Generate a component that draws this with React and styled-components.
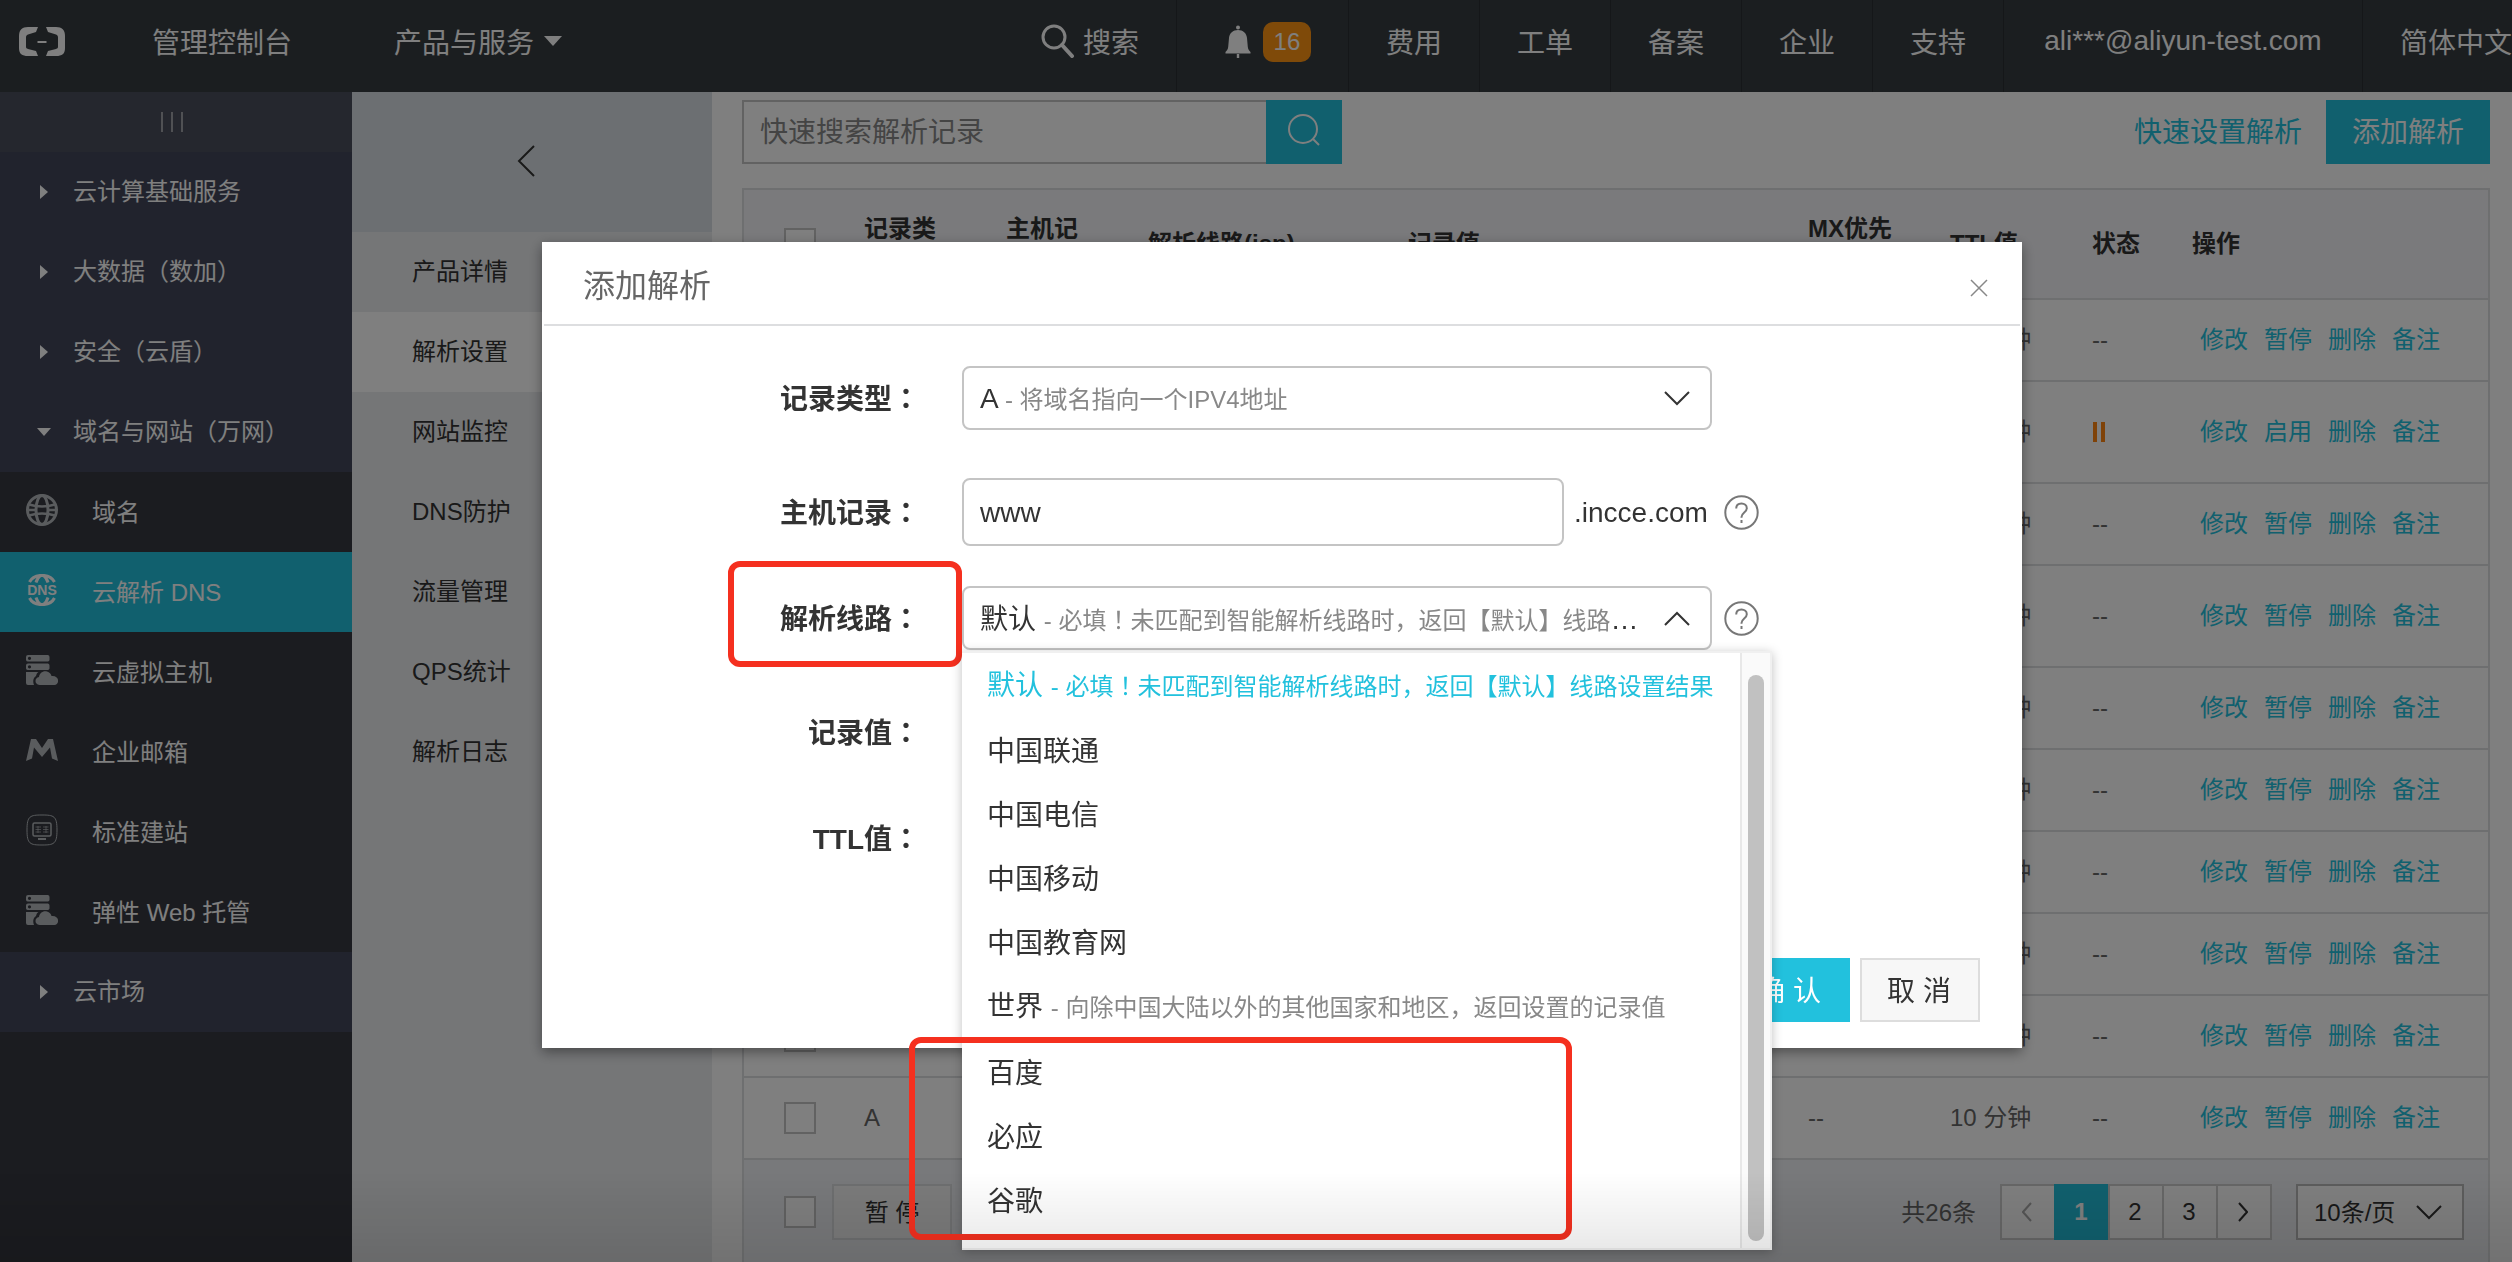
import React from "react";
import styled, { createGlobalStyle, css } from "styled-components";

const color = {
  brand: "#22c1dd",
  ink: "#333",
  note: "#888",
  line: "#dddee0",
  field: "#c4c4c4",
  mark: "#f5301f",
};

const GlobalStyle = createGlobalStyle`
  *, *::before, *::after { box-sizing: border-box; }
  body {
    margin: 0;
    overflow: hidden;
    font-family: "Liberation Sans", "Noto Sans CJK SC", sans-serif;
    font-size: 24px;
    color: ${color.ink};
    background: #fff;
  }
  button, input, select { font: inherit; color: inherit; margin: 0; }
  a { text-decoration: none; color: inherit; }
  ul { list-style: none; margin: 0; padding: 0; }
  svg { display: block; flex: none; }
`;

const Page = styled.div`
  height: 100vh;
  display: flex;
  flex-direction: column;
  overflow: hidden;
`;

/* ---------- top bar ---------- */

const TopBar = styled.header`
  flex: none;
  height: 92px;
  display: flex;
  align-items: stretch;
  background: #373d41;
  color: #fff;
  font-size: 28px;
  overflow: hidden;
`;

const Brand = styled.a`
  width: 152px;
  flex: none;
  padding-left: 18px;
  padding-bottom: 8px;
  display: flex;
  align-items: center;
`;

const TopLink = styled.a`
  display: flex;
  align-items: center;
  gap: 10px;
  padding-bottom: 10px;
  margin-right: 102px;
  white-space: nowrap;
`;

const TopNav = styled.nav`
  margin-left: auto;
  display: flex;
  flex: none;
`;

const TopItem = styled.a`
  display: flex;
  align-items: center;
  justify-content: ${(p) => (p.$end ? "flex-end" : "center")};
  gap: ${(p) => (p.$gap ? p.$gap : 8)}px;
  min-width: ${(p) => p.$min || 0}px;
  padding: 0 ${(p) => (p.$last ? 0 : 37)}px ${(p) => (p.$gap ? 8 : 10)}px 37px;
  border-left: 1px solid ${(p) => (p.$first ? "transparent" : "#2a2f32")};
  white-space: nowrap;
`;

const Count = styled.span`
  width: 48px;
  height: 40px;
  border-radius: 10px;
  background: #ff9413;
  font-size: 24px;
  line-height: 40px;
  text-align: center;
`;

/* ---------- side columns ---------- */

const Body = styled.div`
  flex: 1;
  min-height: 0;
  display: flex;
`;

const Sidebar = styled.nav`
  width: 352px;
  flex: none;
  background: #363840;
  color: #fff;
`;

const Collapse = styled.button`
  display: flex;
  align-items: center;
  justify-content: center;
  gap: 8px;
  width: 100%;
  height: 60px;
  padding: 0 8px 0 0;
  border: 0;
  background: #4b4f5c;
  span { width: 2px; height: 20px; background: #a0a2a8; }
`;

const Group = styled.a`
  display: flex;
  align-items: center;
  gap: 21px;
  height: 80px;
  padding: 0 0 6px 36px;
  background: #43475a;
`;

const ArrowSlot = styled.span`
  width: 16px;
  padding-top: 6px;
  display: flex;
  justify-content: center;
`;

const SubItem = styled.a`
  display: flex;
  align-items: center;
  gap: 34px;
  height: 80px;
  padding: 0 0 4px 26px;
  background: ${(p) => (p.$active ? color.brand : "#363840")};
  svg { color: ${(p) => (p.$active ? "#fff" : "#b4b8bc")}; }
`;

const ProductNav = styled.nav`
  width: 360px;
  flex: none;
  background: #eaecef;
`;

const ProductHead = styled.div`
  height: 140px;
  display: flex;
  justify-content: center;
  align-items: center;
  background: #d9dfe4;
`;

const BackButton = styled.button`
  border: 0;
  background: none;
  padding: 0 12px 2px 0;
`;

const ProductItem = styled.a`
  display: flex;
  align-items: center;
  height: 80px;
  padding: 0 0 6px 60px;
  background: ${(p) => (p.$active ? "#fff" : "transparent")};
`;

/* ---------- records ---------- */

const Main = styled.main`
  flex: 1;
  min-width: 0;
  padding: 8px 22px 0 30px;
  background: #fff;
`;

const Toolbar = styled.div`
  display: flex;
  align-items: center;
  height: 64px;
  margin-bottom: 24px;
  font-size: 28px;
`;

const SearchForm = styled.form`
  display: flex;
  height: 64px;
`;

const SearchInput = styled.input`
  width: 524px;
  border: 2px solid ${color.field};
  border-right: 0;
  border-radius: 0;
  padding: 2px 16px 0 16px;
  background: #fff;
  &::placeholder { color: #888; opacity: 1; }
`;

const SearchButton = styled.button`
  width: 76px;
  border: 0;
  padding: 0 0 4px;
  display: flex;
  align-items: center;
  justify-content: center;
  background: ${color.brand};
`;

const QuickLink = styled.a`
  margin-left: auto;
  margin-right: 24px;
  padding-bottom: 4px;
  color: ${color.brand};
`;

const AddButton = styled.button`
  height: 64px;
  padding: 0 26px 4px;
  border: 0;
  background: ${color.brand};
  color: #fff;
`;

const Records = styled.table`
  width: 100%;
  table-layout: fixed;
  border-collapse: separate;
  border-spacing: 0;
  border: 2px solid ${color.line};
  border-bottom: 0;
`;

const cell = css`
  padding: 0 30px 0 20px;
  text-align: left;
  vertical-align: middle;
  line-height: 30px;
  border-bottom: 2px solid ${color.line};
  &:first-child { padding: 0 0 0 40px; }
`;

const Th = styled.th`
  ${cell}
  height: 110px;
  background: #f4f5f8;
  font-weight: bold;
`;

const Td = styled.td`
  ${cell}
  height: ${(p) => (p.$tall ? 102 : 82)}px;
  color: #666;
`;

const Check = styled.input`
  appearance: none;
  display: block;
  width: 32px;
  height: 32px;
  border: 2px solid ${color.field};
  background: #fff;
`;

const Actions = styled.div`
  display: flex;
  gap: 16px;
  padding-left: 8px;
  color: ${color.brand};
  white-space: nowrap;
`;

const Paused = styled.span`
  display: flex;
  gap: 4px;
  padding-left: 1px;
  span { width: 4px; height: 20px; background: #ff8410; }
`;

const TableFoot = styled.div`
  display: flex;
  align-items: center;
  height: 106px;
  padding: 0 24px 0 40px;
  border: 2px solid ${color.line};
  border-top: 0;
  background: #f1f3f6;
`;

const BatchButton = styled.button`
  height: 56px;
  width: 120px;
  margin-left: 16px;
  padding: 0 0 3px;
  border: 2px solid ${color.line};
  background: #f7f7f7;
`;

const Total = styled.span`
  margin-left: auto;
  margin-right: 26px;
  padding-bottom: 3px;
  color: #666;
`;

const Pager = styled.nav`
  display: flex;
  margin-right: 24px;
`;

const PageButton = styled.button`
  width: 56px;
  height: 56px;
  margin-left: -2px;
  padding: 0 2px 0 0;
  display: flex;
  align-items: center;
  justify-content: center;
  border: 2px solid ${(p) => (p.$active ? color.brand : "#cfcfcf")};
  background: ${(p) => (p.$active ? color.brand : "#fff")};
  color: ${(p) => (p.$active ? "#fff" : p.disabled ? "#aaa" : color.ink)};
  font-weight: ${(p) => (p.$active ? "bold" : "normal")};
`;

const PageSize = styled.div`
  display: flex;
  align-items: center;
  height: 56px;
  width: 168px;
  padding-right: 20px;
  border: 2px solid #bbb;
  background: #fff;
`;

const PageSizeSelect = styled.select`
  appearance: none;
  flex: 1;
  min-width: 0;
  height: 100%;
  padding: 0 0 0 16px;
  border: 0;
  background: none;
`;

/* ---------- dialog ---------- */

const Overlay = styled.div`
  position: fixed;
  inset: 0;
  display: flex;
  justify-content: center;
  align-items: flex-start;
  padding: 242px 0 0 52px;
  background: rgba(0, 0, 0, 0.5);
`;

const Dialog = styled.section`
  width: 1480px;
  max-width: 100%;
  background: #fff;
  box-shadow: 0 4px 12px rgba(0, 0, 0, 0.4);
  font-size: 28px;
`;

const DialogHead = styled.header`
  display: flex;
  align-items: center;
  justify-content: space-between;
  height: 84px;
  margin: 0 2px;
  padding: 0 32px 0 39px;
  border-bottom: 2px solid ${color.line};
`;

const DialogTitle = styled.h2`
  margin: 0;
  font-size: 32px;
  font-weight: normal;
  color: #666;
`;

const CloseButton = styled.button`
  border: 0;
  background: none;
  padding: 10px 0 0;
`;

const Form = styled.form`
  display: flex;
  flex-direction: column;
  gap: 40px;
  padding: 40px 0 88px;
`;

const Row = styled.div`
  display: flex;
  align-items: center;
  padding-top: ${(p) => (p.$spaced ? 8 : 0)}px;
`;

const Label = styled.label`
  position: relative;
  width: 378px;
  margin-right: 42px;
  padding-bottom: 3px;
  font-weight: bold;
  text-align: right;
  white-space: nowrap;
`;

const MidPunct = styled.span`
  font-family: "Noto Sans CJK JP", sans-serif;
`;

const TextInput = styled.input`
  width: ${(p) => (p.$short ? 602 : 750)}px;
  height: 68px;
  padding: 2px 16px 0;
  border: 2px solid ${color.field};
  border-radius: 8px;
  background: #fff;
`;

const Suffix = styled.span`
  width: 138px;
  margin-left: 10px;
  padding-top: 2px;
`;

const Help = styled.button`
  border: 0;
  padding: 0;
  margin-left: 12px;
  background: none;
  color: #777;
`;

const SelectBox = styled.div`
  position: relative;
  display: flex;
  align-items: center;
  width: 750px;
  height: 64px;
  padding: 0 20px 0 16px;
  border: 2px solid ${color.field};
  border-radius: 8px;
  background: #fff;
`;

const NativeSelect = styled.select`
  position: absolute;
  inset: 0;
  width: 100%;
  opacity: 0;
`;

const Shown = styled.span`
  flex: 1;
  min-width: 0;
  margin-right: 24px;
  padding-bottom: 2px;
  overflow: hidden;
  white-space: nowrap;
  text-overflow: ellipsis;
`;

const Note = styled.span`
  font-size: 24px;
  color: ${(p) => (p.$active ? "inherit" : color.note)};
`;

const Menu = styled.div`
  position: absolute;
  z-index: 2;
  top: 63px;
  left: -2px;
  display: flex;
  width: 810px;
  background: #fff;
  border: 2px solid #f0f0f0;
  border-left: 0;
  box-shadow: 0 2px 10px rgba(0, 0, 0, 0.25);
`;

const Options = styled.ul`
  flex: 1;
  padding: 1px 0 14px;
`;

const Option = styled.li`
  height: ${(p) => (p.$noted ? 66 : 64)}px;
  line-height: ${(p) => (p.$noted ? 62 : 64)}px;
  padding-left: 25px;
  white-space: nowrap;
  color: ${(p) => (p.$active ? color.brand : color.ink)};
`;

const Track = styled.div`
  width: 30px;
  padding: 22px 6px 7px 6px;
  display: flex;
  border-left: 2px solid #e8e8e8;
  background: #fafafa;
`;

const Thumb = styled.div`
  flex: 1;
  border-radius: 8px;
  background: #c1c1c1;
`;

const LabelMark = styled.span`
  position: absolute;
  top: -36px;
  right: -42px;
  width: 234px;
  height: 106px;
  border: 6px solid ${color.mark};
  border-radius: 12px;
`;

const OptionsMark = styled.span`
  position: absolute;
  left: -53px;
  bottom: 8px;
  width: 663px;
  height: 203px;
  border: 6px solid ${color.mark};
  border-radius: 12px;
`;

const DialogFoot = styled.footer`
  display: flex;
  justify-content: flex-end;
  gap: 10px;
  padding: 0 42px 26px;
`;

const FootButton = styled.button`
  width: 120px;
  height: 64px;
  padding: 0 2px 2px 0;
  border: 2px solid ${(p) => (p.$primary ? color.brand : "#ddd")};
  background: ${(p) => (p.$primary ? color.brand : "#f7f7f7")};
  color: ${(p) => (p.$primary ? "#fff" : color.ink)};
`;

const BottomShade = styled.div`
  position: fixed;
  left: 0;
  right: 0;
  bottom: 0;
  height: 90px;
  pointer-events: none;
  background: linear-gradient(rgba(0, 0, 0, 0), rgba(0, 0, 0, 0.1));
`;

/* ---------- icons ---------- */

const Logo = () => (
  <svg width="48" height="32" viewBox="0 0 48 32" fill="#fff">
    <path d="M20 1H10C4 1 1 4 1 10v12c0 6 3 8 9 8h10l-2-5-8-2c-1.500-.5-2-1-2-2.500v-9c0-1.500.5-2.500 2-3L18 6z" />
    <path d="M28 1h10c6 0 9 3 9 9v12c0 6-3 8-9 8H28l2-5 8-2c1.500-.5 2-1 2-2.500v-9c0-1.500-.5-2.500-2-3L30 6z" />
    <path d="M19.500 15h9v2h-9z" />
  </svg>
);

const Triangle = ({ right }) => (
  <svg
    width={right ? 8 : 14}
    height={right ? 14 : 8}
    viewBox={right ? "0 0 8 14" : "0 0 14 8"}
    fill="currentColor"
  >
    <path d={right ? "M0 0l8 7-8 7z" : "M0 0h14L7 8z"} />
  </svg>
);

const Magnifier = () => (
  <svg width="34" height="34" viewBox="0 0 34 34" fill="none" stroke="#fff">
    <circle cx="13" cy="13" r="11" strokeWidth="3" />
    <path d="M21 21l10 11" strokeWidth="4" strokeLinecap="round" />
  </svg>
);

const ThinMagnifier = () => (
  <svg width="34" height="34" viewBox="0 0 34 34" fill="none" stroke="#fff" strokeWidth="2">
    <circle cx="16" cy="16" r="14" />
    <path d="M26 26l6 6" />
  </svg>
);

const Bell = () => (
  <svg width="26" height="34" viewBox="0 0 26 34" fill="#fff">
    <circle cx="13" cy="2.500" r="2" />
    <path d="M13 5c5 0 8.500 3 9 8l.8 9c.3 2.500 1.500 3.500 2.700 5v1.500H.5V27c1.200-1.500 2.400-2.500 2.700-5l.8-9c.5-5 4-8 9-8z" />
    <path d="M11.800 29h2.400v4h-2.400z" />
  </svg>
);

const Globe = () => (
  <svg width="32" height="32" viewBox="0 0 32 32" fill="none" stroke="currentColor" strokeWidth="3">
    <circle cx="16" cy="16" r="14.500" />
    <ellipse cx="16" cy="16" rx="6" ry="14.500" />
    <path d="M3 10.500c8 2.500 18 2.500 26 0M3 21.500c8-2.500 18-2.500 26 0M2 16h8M22 16h8" strokeWidth="2.500" />
  </svg>
);

const DnsGlobe = () => (
  <svg width="32" height="32" viewBox="0 0 32 32" fill="none" stroke="currentColor" strokeWidth="3">
    <path d="M3.500 8C8-.8 24-.8 28.500 8M3.500 24c4.500 8.800 20.500 8.800 25 0" />
    <path d="M10 8.500C11 5.500 12.500 3 14 2M22 8.500C21 5.500 19.500 3 18 2M10 23.500c1 3 2.500 5.500 4 6.500M22 23.500c-1 3-2.500 5.500-4 6.500" />
    <text
      x="16"
      y="21"
      textAnchor="middle"
      fill="currentColor"
      stroke="none"
      fontSize="14"
      fontWeight="bold"
      fontFamily="Liberation Sans, sans-serif"
    >
      DNS
    </text>
  </svg>
);

const CloudHost = () => (
  <svg width="32" height="30" viewBox="0 0 32 30" fill="currentColor">
    <path
      fillRule="evenodd"
      d="M2 0h20a2 2 0 0 1 1.500 2v3A2 2 0 0 1 22 6.500H2A2 2 0 0 1 0 5V2a2 2 0 0 1 2-2zm1.500 1.700a1.600 1.600 0 1 0 0 3.200 1.600 1.600 0 0 0 0-3.200z"
    />
    <path
      fillRule="evenodd"
      d="M2 8.500h20a2 2 0 0 1 1.500 2v3A2 2 0 0 1 22 15H2a2 2 0 0 1-2-1.500v-3a2 2 0 0 1 2-2zm1.500 1.700a1.600 1.600 0 1 0 0 3.200 1.600 1.600 0 0 0 0-3.200z"
    />
    <path d="M0 17h12.500c-1.500 1-2.200 2.500-2.500 4-2.500 1.500-3.500 5-2 9H2a2 2 0 0 1-2-2z" />
    <path d="M13.500 30c-5.500-.5-5-7.500-.5-8 .5-4 4-6.500 8-5.500 2.500.5 4 2.500 4.500 4.500 8-1 8.500 8.500 3 9z" />
  </svg>
);

const MailWings = () => (
  <svg width="32" height="22" viewBox="0 0 32 22" fill="currentColor">
    <path d="M5 0h5l6 9 6-9h5l5 22-6-2.500-2-11L16 18 8 8.500l-2 11L0 22z" />
  </svg>
);

const SiteBuilder = () => (
  <svg width="32" height="32" viewBox="0 0 32 32" fill="none" stroke="currentColor">
    <path d="M16 1c12 0 15 1 15 15s-3 15-15 15S1 30 1 16 4 1 16 1z" strokeWidth="1" />
    <rect x="7" y="9" width="18" height="13" rx="1.500" strokeWidth="1.500" />
    <path d="M12 25h8" strokeWidth="2" />
    <path d="M9.500 13h5.500M9.500 15.500h5.500M9.500 18h5.500M12 12v7M17 13h5.500M17 15.500h5.500M17 18h5.500M20 12v7" strokeWidth="1" opacity=".7" />
  </svg>
);

const paths = {
  left: [18, 32, "M17 1L2 16l15 15"],
  right: [10, 20, "M1 1l8 9-8 9"],
  prev: [10, 20, "M9 1L1 10l8 9"],
  down: [26, 15, "M1 1l12 12L25 1"],
  up: [26, 15, "M1 14L13 2l12 12"],
};

const Chevron = ({ to }) => {
  const [w, h, d] = paths[to];
  return (
    <svg width={w} height={h} viewBox={`0 0 ${w} ${h}`} fill="none" stroke="currentColor" strokeWidth="2">
      <path d={d} />
    </svg>
  );
};

const Cross = () => (
  <svg width="18" height="18" viewBox="0 0 18 18" fill="none" stroke="#888" strokeWidth="1.500">
    <path d="M1 1l16 16M17 1L1 17" />
  </svg>
);

const QuestionMark = () => (
  <svg width="35" height="35" viewBox="0 0 35 35" fill="none" stroke="currentColor" strokeWidth="2">
    <circle cx="17.500" cy="17.500" r="16.200" />
    <path d="M12.200 13.500c0-3.200 2.300-5 5.300-5s5.300 1.900 5.300 4.700c0 4.200-5.300 4.300-5.300 8.800v.8" />
    <path d="M17.500 25v3" />
  </svg>
);

/* ---------- data ---------- */

const groups = ["云计算基础服务", "大数据（数加）", "安全（云盾）"];

const services = [
  ["域名", Globe],
  ["云解析 DNS", DnsGlobe],
  ["云虚拟主机", CloudHost],
  ["企业邮箱", MailWings],
  ["标准建站", SiteBuilder],
  ["弹性 Web 托管", CloudHost],
];

const productPages = ["产品详情", "解析设置", "网站监控", "DNS防护", "流量管理", "QPS统计", "解析日志"];

const columns = [
  ["记录类型", 142],
  ["主机记录", 142],
  ["解析线路(isp)", 260],
  ["记录值", null],
  ["MX优先级", 142],
  ["TTL值", 142],
  ["状态", 100],
  ["操作", 316],
];

const records = [
  {},
  { tall: true, paused: true },
  {},
  { tall: true },
  {},
  {},
  {},
  {},
  {},
  { type: "A", mx: "--" },
];

const lineOptions = [
  ["默认", "必填！未匹配到智能解析线路时，返回【默认】线路设置结果"],
  ["中国联通"],
  ["中国电信"],
  ["中国移动"],
  ["中国教育网"],
  ["世界", "向除中国大陆以外的其他国家和地区，返回设置的记录值"],
  ["百度"],
  ["必应"],
  ["谷歌"],
];

/* ---------- parts ---------- */

const FieldLabel = ({ htmlFor, children, marked }) => (
  <Label htmlFor={htmlFor}>
    {children}
    <MidPunct>：</MidPunct>
    {marked && <LabelMark />}
  </Label>
);

const Noted = ({ name, note, active }) => {
  if (!note) return name;
  const [head, tail] = note.split("！");
  return (
    <>
      {name}{" "}
      <Note $active={active}>
        - {head}
        {tail && (
          <>
            <MidPunct>！</MidPunct>
            {tail}
          </>
        )}
      </Note>
    </>
  );
};

const Dropdown = ({ id, name, note, open, options = [], children }) => (
  <SelectBox>
    <Shown aria-hidden="true">
      <Noted name={name} note={note} />
    </Shown>
    <Chevron to={open ? "up" : "down"} />
    <NativeSelect id={id} defaultValue={name}>
      {(options.length ? options : [name]).map((o) => (
        <option key={o}>{o}</option>
      ))}
    </NativeSelect>
    {children}
  </SelectBox>
);

const HelpButton = () => (
  <Help type="button" aria-label="帮助">
    <QuestionMark />
  </Help>
);

const LineMenu = () => (
  <Menu>
    <Options role="listbox" aria-label="解析线路">
      {lineOptions.map(([name, note], i) => (
        <Option key={name} role="option" aria-selected={i === 0} $active={i === 0} $noted={!!note}>
          <Noted name={name} note={note} active={i === 0} />
        </Option>
      ))}
    </Options>
    <Track>
      <Thumb />
    </Track>
    <OptionsMark />
  </Menu>
);

const RecordRow = ({ type, mx, tall, paused }) => (
  <tr>
    <Td $tall={tall}>
      <Check type="checkbox" aria-label="选择记录" />
    </Td>
    <Td>{type}</Td>
    <Td />
    <Td />
    <Td />
    <Td>{mx}</Td>
    <Td>10 分钟</Td>
    <Td>
      {paused ? (
        <Paused>
          <span />
          <span />
        </Paused>
      ) : (
        "--"
      )}
    </Td>
    <Td>
      <Actions>
        <a href="#edit">修改</a>
        <a href="#toggle">{paused ? "启用" : "暂停"}</a>
        <a href="#delete">删除</a>
        <a href="#remark">备注</a>
      </Actions>
    </Td>
  </tr>
);

export default function App() {
  return (
    <>
      <GlobalStyle />
      <Page>
        <TopBar>
          <Brand href="#home" aria-label="首页">
            <Logo />
          </Brand>
          <TopLink href="#console">管理控制台</TopLink>
          <TopLink href="#products">
            产品与服务
            <svg width="18" height="10" viewBox="0 0 18 10" fill="#fff">
              <path d="M0 0h18L9 10z" />
            </svg>
          </TopLink>
          <TopNav>
            <TopItem href="#search" $first>
              <Magnifier />
              搜索
            </TopItem>
            <TopItem href="#messages" $gap={12} $min={172} $end>
              <Bell />
              <Count>16</Count>
            </TopItem>
            {["费用", "工单", "备案", "企业", "支持"].map((t) => (
              <TopItem href="#nav" key={t}>
                {t}
              </TopItem>
            ))}
            <TopItem href="#account" $min={359}>
              ali***@aliyun-test.com
            </TopItem>
            <TopItem href="#language" $last>
              简体中文
            </TopItem>
          </TopNav>
        </TopBar>

        <Body>
          <Sidebar>
            <Collapse type="button" aria-label="收起菜单">
              <span />
              <span />
              <span />
            </Collapse>
            {groups.map((g) => (
              <Group href="#group" key={g}>
                <ArrowSlot>
                  <Triangle right />
                </ArrowSlot>
                {g}
              </Group>
            ))}
            <Group href="#group">
              <ArrowSlot>
                <Triangle />
              </ArrowSlot>
              域名与网站（万网）
            </Group>
            {services.map(([name, Icon], i) => (
              <SubItem href="#service" key={name} $active={i === 1}>
                <Icon />
                {name}
              </SubItem>
            ))}
            <Group href="#group">
              <ArrowSlot>
                <Triangle right />
              </ArrowSlot>
              云市场
            </Group>
          </Sidebar>

          <ProductNav>
            <ProductHead>
              <BackButton type="button" aria-label="返回">
                <Chevron to="left" />
              </BackButton>
            </ProductHead>
            {productPages.map((p, i) => (
              <ProductItem href="#page" key={p} $active={i === 1}>
                {p}
              </ProductItem>
            ))}
          </ProductNav>

          <Main>
            <Toolbar>
              <SearchForm>
                <SearchInput aria-label="搜索" placeholder="快速搜索解析记录" />
                <SearchButton type="button" aria-label="搜索">
                  <ThinMagnifier />
                </SearchButton>
              </SearchForm>
              <QuickLink href="#quick">快速设置解析</QuickLink>
              <AddButton type="button">添加解析</AddButton>
            </Toolbar>

            <Records>
              <colgroup>
                <col width="100" />
                {columns.map(([name, w]) => (
                  <col key={name} width={w || undefined} />
                ))}
              </colgroup>
              <thead>
                <tr>
                  <Th>
                    <Check type="checkbox" aria-label="全选" />
                  </Th>
                  {columns.map(([name]) => (
                    <Th key={name}>{name}</Th>
                  ))}
                </tr>
              </thead>
              <tbody>
                {records.map((r, i) => (
                  <RecordRow key={i} {...r} />
                ))}
              </tbody>
            </Records>
            <TableFoot>
              <Check type="checkbox" aria-label="全选" />
              <BatchButton type="button">暂 停</BatchButton>
              <Total>共26条</Total>
              <Pager>
                <PageButton type="button" disabled aria-label="上一页">
                  <Chevron to="prev" />
                </PageButton>
                <PageButton type="button" $active>
                  1
                </PageButton>
                <PageButton type="button">2</PageButton>
                <PageButton type="button">3</PageButton>
                <PageButton type="button" aria-label="下一页">
                  <Chevron to="right" />
                </PageButton>
              </Pager>
              <PageSize>
                <PageSizeSelect aria-label="每页条数">
                  <option>10条/页</option>
                </PageSizeSelect>
                <Chevron to="down" />
              </PageSize>
            </TableFoot>
          </Main>
        </Body>
      </Page>

      <Overlay>
        <Dialog role="dialog" aria-labelledby="dialog-title">
          <DialogHead>
            <DialogTitle id="dialog-title">添加解析</DialogTitle>
            <CloseButton type="button" aria-label="关闭">
              <Cross />
            </CloseButton>
          </DialogHead>
          <Form>
            <Row>
              <FieldLabel htmlFor="type">记录类型</FieldLabel>
              <Dropdown id="type" name="A" note="将域名指向一个IPV4地址" />
            </Row>
            <Row $spaced>
              <FieldLabel htmlFor="host">主机记录</FieldLabel>
              <TextInput id="host" defaultValue="www" $short />
              <Suffix>.incce.com</Suffix>
              <HelpButton />
            </Row>
            <Row>
              <FieldLabel htmlFor="line" marked>
                解析线路
              </FieldLabel>
              <Dropdown
                id="line"
                name="默认"
                note={lineOptions[0][1]}
                options={lineOptions.map(([name]) => name)}
                open
              >
                <LineMenu />
              </Dropdown>
              <HelpButton />
            </Row>
            <Row $spaced>
              <FieldLabel htmlFor="value">记录值</FieldLabel>
              <TextInput id="value" />
            </Row>
            <Row>
              <FieldLabel htmlFor="ttl">TTL值</FieldLabel>
              <Dropdown id="ttl" name="10 分钟" />
            </Row>
          </Form>
          <DialogFoot>
            <FootButton type="button" $primary>
              确 认
            </FootButton>
            <FootButton type="button">取 消</FootButton>
          </DialogFoot>
        </Dialog>
      </Overlay>
      <BottomShade />
    </>
  );
}
